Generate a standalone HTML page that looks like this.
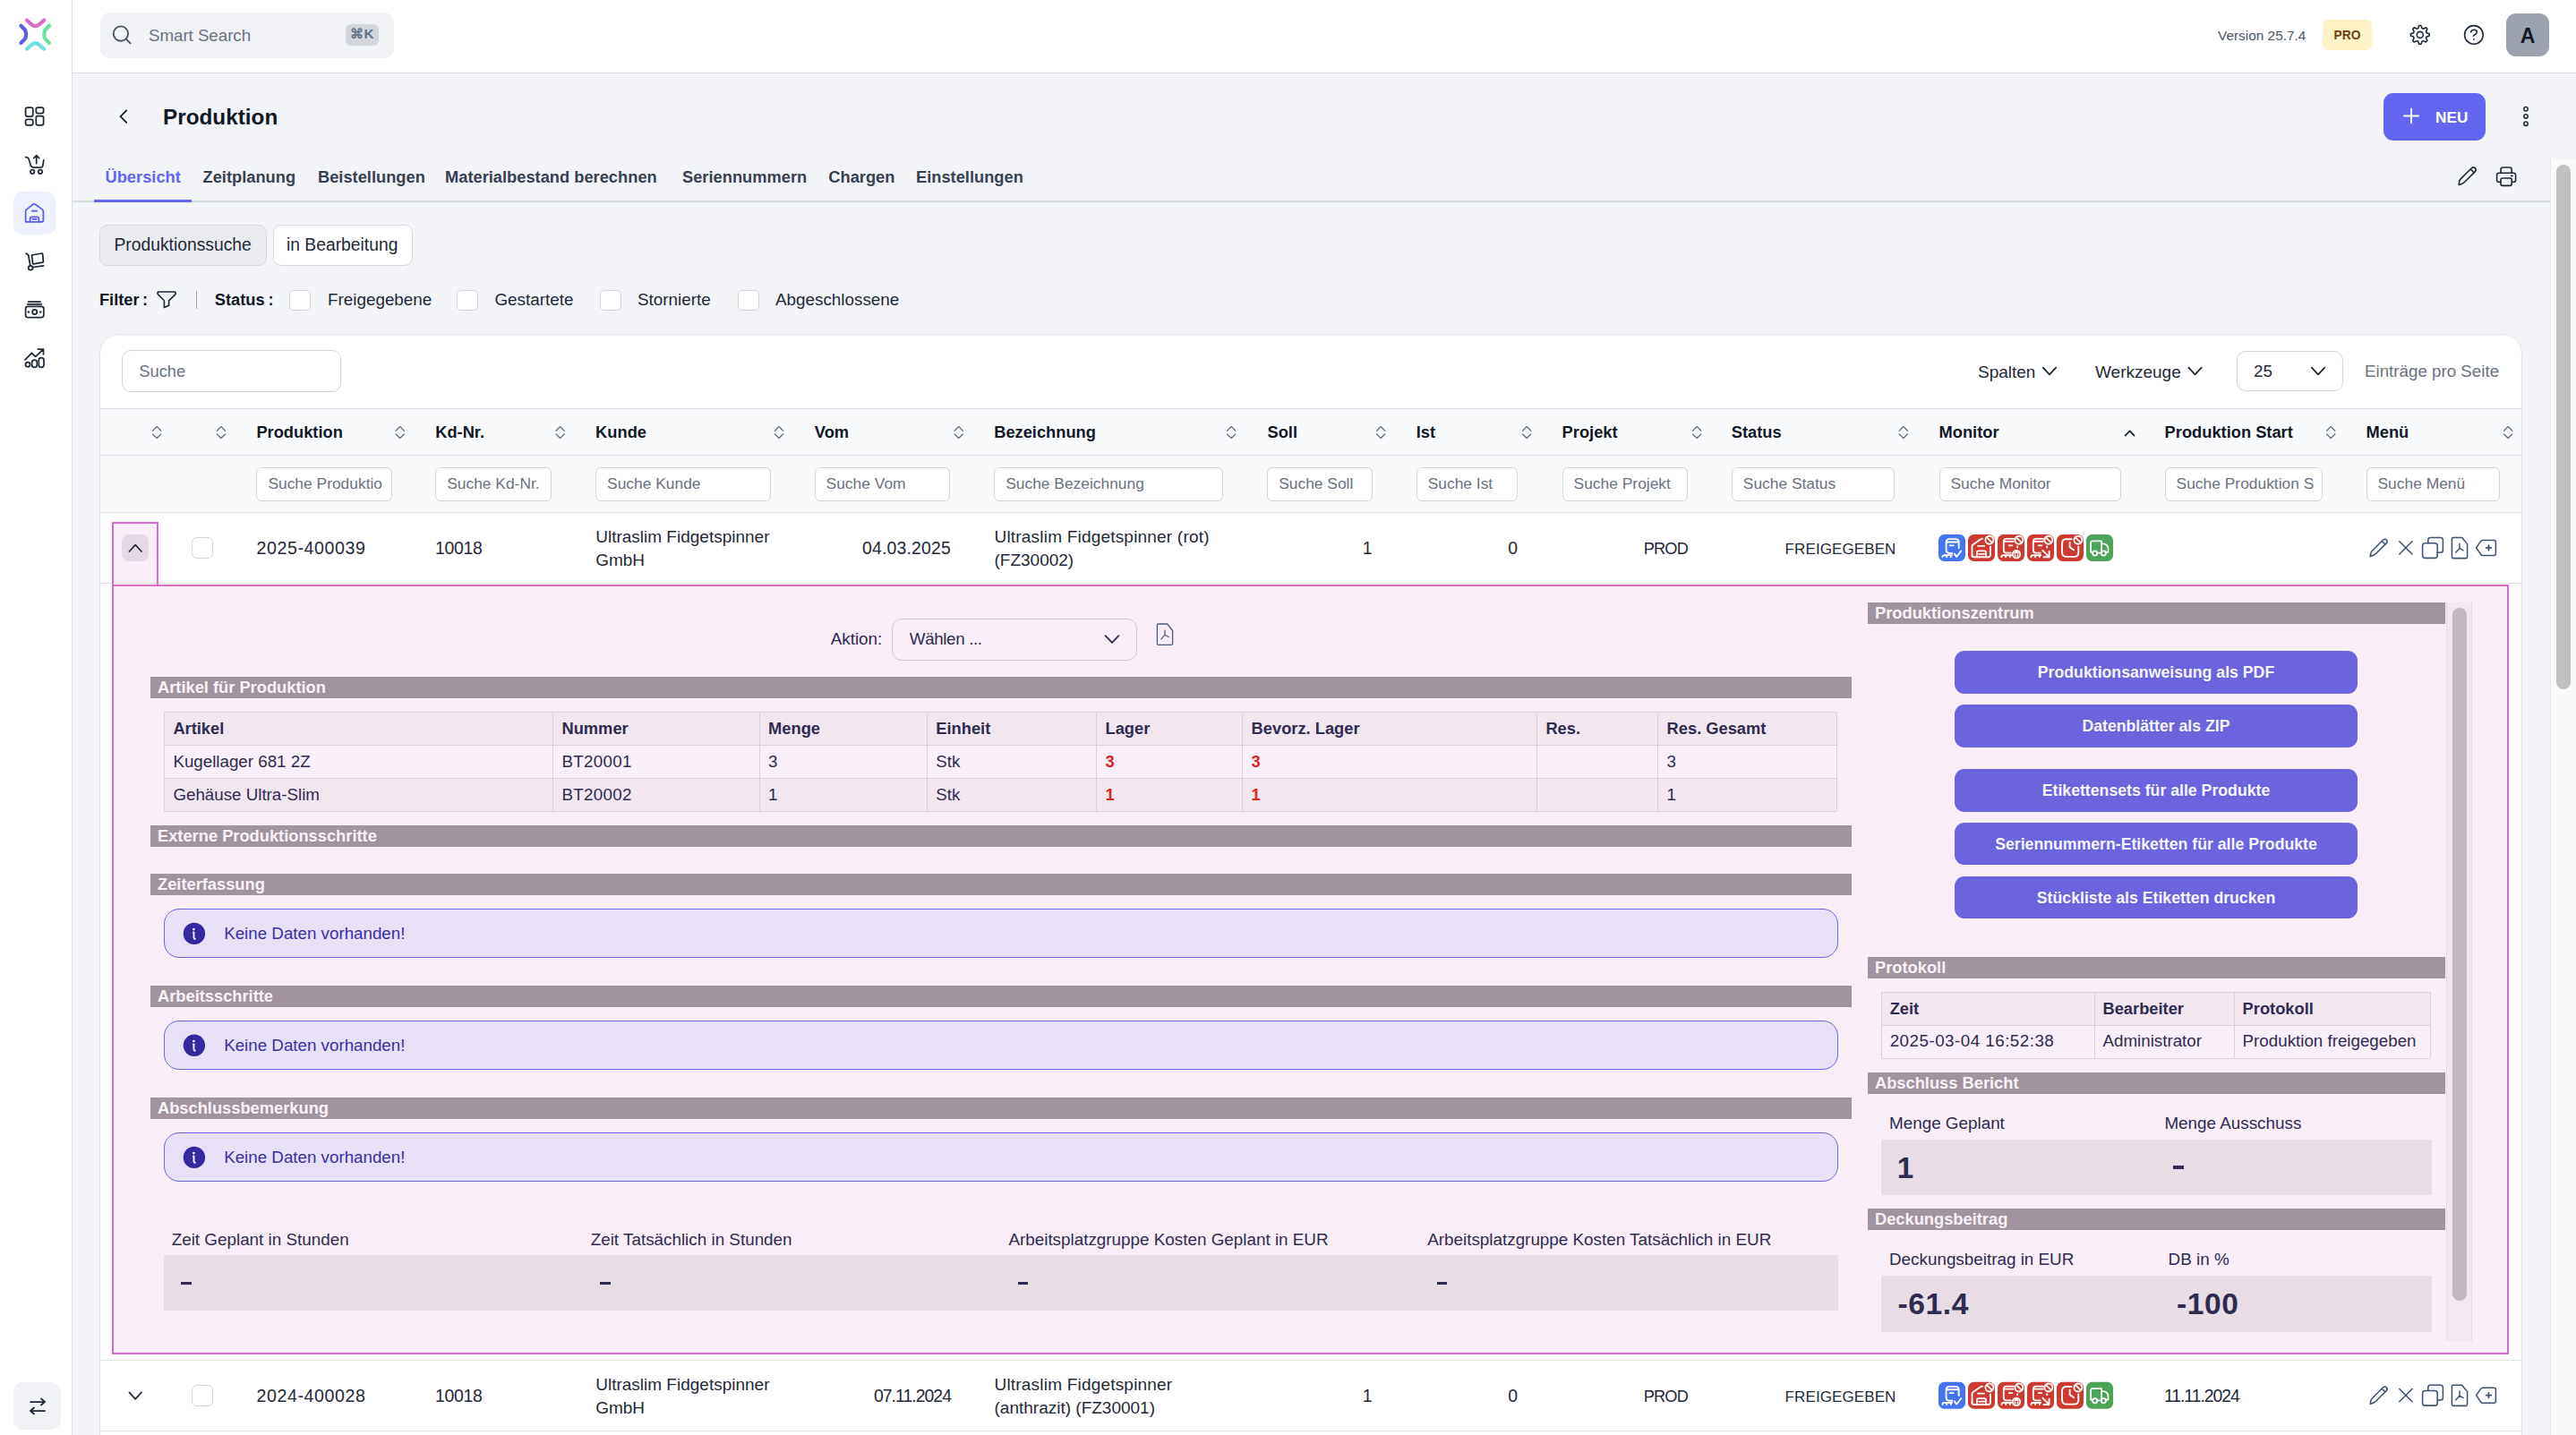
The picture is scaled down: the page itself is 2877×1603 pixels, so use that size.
<!DOCTYPE html>
<html lang="de"><head><meta charset="utf-8"><title>Produktion</title>
<style>
html,body{margin:0;padding:0;}
body{width:2877px;height:1603px;overflow:hidden;position:relative;background:#f3f4f7;font-family:"Liberation Sans",sans-serif;color:#1f2937;}
.t{position:absolute;line-height:1;white-space:nowrap;}
.r{position:absolute;box-sizing:border-box;}
svg.ov{position:absolute;left:0;top:0;width:2877px;height:1603px;overflow:visible;}
</style></head><body>

<div class="r" style="left:0.0px;top:0.0px;width:2877.0px;height:82.0px;background:#fff;border-bottom:1px solid #dcdfe5;"></div>
<div class="r" style="left:0.0px;top:0.0px;width:81.0px;height:1603.0px;background:#fff;border-right:1px solid #dcdfe5;"></div>
<div class="r" style="left:112.0px;top:14.0px;width:328.0px;height:51.0px;background:#f1f2f6;border-radius:11px;"></div>
<div class="t" style="left:166.0px;top:31.0px;font-size:18.75px;color:#6b7280;letter-spacing:-0.05px;">Smart Search</div>
<div class="r" style="left:386.0px;top:27.0px;width:37.0px;height:24.0px;background:#d3d6dc;border-radius:6px;"></div>
<div class="t" style="left:386.0px;width:37px;text-align:center;top:29.7px;font-size:15.4px;font-weight:700;color:#64748b;">&#8984;K</div>
<div class="t" style="left:2477.0px;top:31.9px;font-size:15.4px;color:#4b5563;">Version 25.7.4</div>
<div class="r" style="left:2594.0px;top:22.0px;width:55.0px;height:34.0px;background:#fef3c7;border-radius:6px;"></div>
<div class="t" style="left:2594.0px;width:55px;text-align:center;top:33.0px;font-size:13.8px;font-weight:700;color:#713f12;">PRO</div>
<div class="r" style="left:2799.0px;top:15.0px;width:48.0px;height:48.0px;background:#9ca3af;border-radius:11px;"></div>
<div class="t" style="left:2799.0px;width:48px;text-align:center;top:28.9px;font-size:23px;font-weight:700;color:#111827;">A</div>
<div class="r" style="left:15.0px;top:214.0px;width:47.0px;height:48.0px;background:#eef0fd;border-radius:10px;"></div>
<div class="r" style="left:15.0px;top:1544.0px;width:53.0px;height:53.0px;background:#f1f2f6;border-radius:11px;"></div>
<div class="t" style="left:182.0px;top:118.5px;font-size:24.3px;font-weight:700;color:#111827;">Produktion</div>
<div class="r" style="left:2662.0px;top:104.0px;width:114.0px;height:53.0px;background:#6366f1;border-radius:11px;"></div>
<div class="t" style="left:2720.0px;top:123.1px;font-size:17.2px;font-weight:700;color:#ffffff;">NEU</div>
<div class="r" style="left:81.0px;top:223.5px;width:2767.0px;height:2.5px;background:#d7dbe2;"></div>
<div class="r" style="left:105.0px;top:222.5px;width:109.0px;height:3.5px;background:#6366f1;"></div>
<div class="t" style="left:117.5px;top:189.2px;font-size:18.3px;font-weight:700;color:#6366f1;">&Uuml;bersicht</div>
<div class="t" style="left:226.5px;top:189.2px;font-size:18.3px;font-weight:700;color:#374151;">Zeitplanung</div>
<div class="t" style="left:355.0px;top:189.2px;font-size:18.3px;font-weight:700;color:#374151;">Beistellungen</div>
<div class="t" style="left:497.0px;top:189.2px;font-size:18.3px;font-weight:700;color:#374151;">Materialbestand berechnen</div>
<div class="t" style="left:762.0px;top:189.2px;font-size:18.3px;font-weight:700;color:#374151;">Seriennummern</div>
<div class="t" style="left:925.3px;top:189.2px;font-size:18.3px;font-weight:700;color:#374151;">Chargen</div>
<div class="t" style="left:1023.0px;top:189.2px;font-size:18.3px;font-weight:700;color:#374151;">Einstellungen</div>
<div class="r" style="left:111.0px;top:251.0px;width:187.0px;height:46.0px;background:#eaebef;border:1px solid #d5d8de;border-radius:9px;"></div>
<div class="t" style="left:127.5px;top:264.4px;font-size:19.3px;color:#1f2937;">Produktionssuche</div>
<div class="r" style="left:304.5px;top:251.0px;width:156.5px;height:46.0px;background:#fff;border:1px solid #d5d8de;border-radius:9px;"></div>
<div class="t" style="left:320.0px;top:264.4px;font-size:19.3px;color:#1f2937;">in Bearbeitung</div>
<div class="t" style="left:111.0px;top:326.3px;font-size:18.2px;font-weight:700;color:#111827;">Filter</div>
<div class="t" style="left:159.0px;top:326.3px;font-size:18.2px;font-weight:700;color:#111827;">:</div>
<div class="r" style="left:218.5px;top:325.0px;width:1.5px;height:20.0px;background:#9ca3af;"></div>
<div class="t" style="left:239.8px;top:326.2px;font-size:18.3px;font-weight:700;color:#111827;">Status</div>
<div class="t" style="left:299.5px;top:326.3px;font-size:18.2px;font-weight:700;color:#111827;">:</div>
<div class="r" style="left:323.0px;top:323.5px;width:23.5px;height:23.5px;background:#fff;border:1px solid #d1d5db;border-radius:5px;"></div>
<div class="t" style="left:366.0px;top:325.7px;font-size:18.85px;color:#1f2937;">Freigegebene</div>
<div class="r" style="left:510.4px;top:323.5px;width:23.5px;height:23.5px;background:#fff;border:1px solid #d1d5db;border-radius:5px;"></div>
<div class="t" style="left:552.4px;top:325.7px;font-size:18.85px;color:#1f2937;">Gestartete</div>
<div class="r" style="left:670.3px;top:323.5px;width:23.5px;height:23.5px;background:#fff;border:1px solid #d1d5db;border-radius:5px;"></div>
<div class="t" style="left:712.0px;top:325.7px;font-size:18.85px;color:#1f2937;">Stornierte</div>
<div class="r" style="left:824.0px;top:323.5px;width:23.5px;height:23.5px;background:#fff;border:1px solid #d1d5db;border-radius:5px;"></div>
<div class="t" style="left:866.0px;top:325.7px;font-size:18.85px;color:#1f2937;">Abgeschlossene</div>
<div class="r" style="left:111.0px;top:372.6px;width:2706.0px;height:1327.4px;background:#fff;border:1px solid #e2e5ea;border-radius:22px 22px 0 0;"></div>
<div class="r" style="left:136.0px;top:391.0px;width:244.5px;height:46.5px;background:#fff;border:1px solid #d1d5db;border-radius:10px;"></div>
<div class="t" style="left:155.3px;top:406.2px;font-size:18.3px;color:#6b7280;">Suche</div>
<div class="t" style="left:2209.0px;top:405.6px;font-size:19.0px;color:#1f2937;">Spalten</div>
<div class="t" style="left:2340.0px;top:405.6px;font-size:19.0px;color:#1f2937;">Werkzeuge</div>
<div class="r" style="left:2498.0px;top:391.6px;width:118.5px;height:45.9px;background:#fff;border:1px solid #d1d5db;border-radius:10px;"></div>
<div class="t" style="left:2517.0px;top:405.8px;font-size:18.75px;color:#1f2937;">25</div>
<div class="t" style="left:2641.0px;top:405.8px;font-size:18.75px;color:#6b7280;">Eintr&auml;ge pro Seite</div>
<div class="r" style="left:112.0px;top:456.0px;width:2704.0px;height:116.5px;background:#f9fafb;border-top:1px solid #dde1e6;border-bottom:1px solid #dde1e6;"></div>
<div class="r" style="left:112.0px;top:507.5px;width:2704.0px;height:1.0px;background:#dde1e6;"></div>
<div class="t" style="left:286.4px;top:474.4px;font-size:18.3px;font-weight:700;color:#111827;">Produktion</div>
<div class="r" style="left:286.4px;top:521.5px;width:151.2px;height:38.0px;background:#fff;border:1px solid #d1d5db;border-radius:6px;overflow:hidden;"></div>
<div class="t" style="left:299.4px;top:532.2px;width:133.2px;overflow:hidden;font-size:17.4px;color:#6b7280;">Suche Produktio</div>
<div class="t" style="left:486.2px;top:474.4px;font-size:18.3px;font-weight:700;color:#111827;">Kd-Nr.</div>
<div class="r" style="left:486.2px;top:521.5px;width:130.3px;height:38.0px;background:#fff;border:1px solid #d1d5db;border-radius:6px;overflow:hidden;"></div>
<div class="t" style="left:499.2px;top:532.2px;width:112.3px;overflow:hidden;font-size:17.4px;color:#6b7280;">Suche Kd-Nr.</div>
<div class="t" style="left:665.1px;top:474.4px;font-size:18.3px;font-weight:700;color:#111827;">Kunde</div>
<div class="r" style="left:665.1px;top:521.5px;width:195.5px;height:38.0px;background:#fff;border:1px solid #d1d5db;border-radius:6px;overflow:hidden;"></div>
<div class="t" style="left:678.1px;top:532.2px;width:177.5px;overflow:hidden;font-size:17.4px;color:#6b7280;">Suche Kunde</div>
<div class="t" style="left:909.8px;top:474.4px;font-size:18.3px;font-weight:700;color:#111827;">Vom</div>
<div class="r" style="left:909.6px;top:521.5px;width:151.7px;height:38.0px;background:#fff;border:1px solid #d1d5db;border-radius:6px;overflow:hidden;"></div>
<div class="t" style="left:922.6px;top:532.2px;width:133.7px;overflow:hidden;font-size:17.4px;color:#6b7280;">Suche Vom</div>
<div class="t" style="left:1110.2px;top:474.4px;font-size:18.3px;font-weight:700;color:#111827;">Bezeichnung</div>
<div class="r" style="left:1110.2px;top:521.5px;width:256.3px;height:38.0px;background:#fff;border:1px solid #d1d5db;border-radius:6px;overflow:hidden;"></div>
<div class="t" style="left:1123.2px;top:532.2px;width:238.3px;overflow:hidden;font-size:17.4px;color:#6b7280;">Suche Bezeichnung</div>
<div class="t" style="left:1415.5px;top:474.4px;font-size:18.3px;font-weight:700;color:#111827;">Soll</div>
<div class="r" style="left:1415.2px;top:521.5px;width:117.4px;height:38.0px;background:#fff;border:1px solid #d1d5db;border-radius:6px;overflow:hidden;"></div>
<div class="t" style="left:1428.2px;top:532.2px;width:99.4px;overflow:hidden;font-size:17.4px;color:#6b7280;">Suche Soll</div>
<div class="t" style="left:1581.7px;top:474.4px;font-size:18.3px;font-weight:700;color:#111827;">Ist</div>
<div class="r" style="left:1581.7px;top:521.5px;width:113.5px;height:38.0px;background:#fff;border:1px solid #d1d5db;border-radius:6px;overflow:hidden;"></div>
<div class="t" style="left:1594.7px;top:532.2px;width:95.5px;overflow:hidden;font-size:17.4px;color:#6b7280;">Suche Ist</div>
<div class="t" style="left:1744.6px;top:474.4px;font-size:18.3px;font-weight:700;color:#111827;">Projekt</div>
<div class="r" style="left:1744.6px;top:521.5px;width:140.8px;height:38.0px;background:#fff;border:1px solid #d1d5db;border-radius:6px;overflow:hidden;"></div>
<div class="t" style="left:1757.6px;top:532.2px;width:122.8px;overflow:hidden;font-size:17.4px;color:#6b7280;">Suche Projekt</div>
<div class="t" style="left:1933.8px;top:474.4px;font-size:18.3px;font-weight:700;color:#111827;">Status</div>
<div class="r" style="left:1933.8px;top:521.5px;width:182.6px;height:38.0px;background:#fff;border:1px solid #d1d5db;border-radius:6px;overflow:hidden;"></div>
<div class="t" style="left:1946.8px;top:532.2px;width:164.6px;overflow:hidden;font-size:17.4px;color:#6b7280;">Suche Status</div>
<div class="t" style="left:2165.5px;top:474.4px;font-size:18.3px;font-weight:700;color:#111827;">Monitor</div>
<div class="r" style="left:2165.5px;top:521.5px;width:203.2px;height:38.0px;background:#fff;border:1px solid #d1d5db;border-radius:6px;overflow:hidden;"></div>
<div class="t" style="left:2178.5px;top:532.2px;width:185.2px;overflow:hidden;font-size:17.4px;color:#6b7280;">Suche Monitor</div>
<div class="t" style="left:2417.6px;top:474.4px;font-size:18.3px;font-weight:700;color:#111827;">Produktion Start</div>
<div class="r" style="left:2417.6px;top:521.5px;width:176.1px;height:38.0px;background:#fff;border:1px solid #d1d5db;border-radius:6px;overflow:hidden;"></div>
<div class="t" style="left:2430.6px;top:532.2px;width:158.1px;overflow:hidden;font-size:17.4px;color:#6b7280;">Suche Produktion S</div>
<div class="t" style="left:2642.5px;top:474.4px;font-size:18.3px;font-weight:700;color:#111827;">Men&uuml;</div>
<div class="r" style="left:2642.5px;top:521.5px;width:149.0px;height:38.0px;background:#fff;border:1px solid #d1d5db;border-radius:6px;overflow:hidden;"></div>
<div class="t" style="left:2655.5px;top:532.2px;width:131.0px;overflow:hidden;font-size:17.4px;color:#6b7280;">Suche Men&uuml;</div>
<div class="r" style="left:112.0px;top:651.0px;width:2704.0px;height:1.0px;background:#dde1e6;"></div>
<div class="r" style="left:214.2px;top:600.2px;width:23.4px;height:23.6px;background:#fff;border:1.5px solid #d1d5db;border-radius:6px;"></div>
<div class="t" style="left:286.5px;top:603.0px;font-size:19.6px;color:#1f2937;letter-spacing:0.6px;">2025-400039</div>
<div class="t" style="left:486.0px;top:603.2px;font-size:19.4px;color:#1f2937;letter-spacing:-0.3px;">10018</div>
<div class="t" style="left:665.2px;top:589.8px;font-size:19.0px;color:#1f2937;">Ultraslim Fidgetspinner</div>
<div class="t" style="left:665.2px;top:616.2px;font-size:19.0px;color:#1f2937;">GmbH</div>
<div class="t" style="left:762.0px;width:300px;text-align:right;top:603.2px;font-size:19.4px;color:#1f2937;letter-spacing:0.2px;">04.03.2025</div>
<div class="t" style="left:1110.5px;top:589.8px;font-size:19.0px;color:#1f2937;letter-spacing:0.2px;">Ultraslim Fidgetspinner (rot)</div>
<div class="t" style="left:1110.5px;top:616.2px;font-size:19.0px;color:#1f2937;">(FZ30002)</div>
<div class="t" style="left:1432.6px;width:100px;text-align:right;top:603.2px;font-size:19.4px;color:#1f2937;">1</div>
<div class="t" style="left:1595.0px;width:100px;text-align:right;top:603.2px;font-size:19.4px;color:#1f2937;">0</div>
<div class="t" style="left:1685.0px;width:200px;text-align:right;top:604.2px;font-size:18.2px;color:#1f2937;letter-spacing:-0.8px;">PROD</div>
<div class="t" style="left:1817.5px;width:300px;text-align:right;top:605.1px;font-size:17.0px;color:#1f2937;letter-spacing:0.1px;">FREIGEGEBEN</div>
<div class="r" style="left:112.0px;top:1597.5px;width:2704.0px;height:1.0px;background:#dde1e6;"></div>
<div class="r" style="left:214.2px;top:1547.0px;width:23.4px;height:23.6px;background:#fff;border:1.5px solid #d1d5db;border-radius:6px;"></div>
<div class="t" style="left:286.5px;top:1549.8px;font-size:19.6px;color:#1f2937;letter-spacing:0.6px;">2024-400028</div>
<div class="t" style="left:486.0px;top:1549.9px;font-size:19.4px;color:#1f2937;letter-spacing:-0.3px;">10018</div>
<div class="t" style="left:665.2px;top:1536.6px;font-size:19.0px;color:#1f2937;">Ultraslim Fidgetspinner</div>
<div class="t" style="left:665.2px;top:1563.0px;font-size:19.0px;color:#1f2937;">GmbH</div>
<div class="t" style="left:762.0px;width:300px;text-align:right;top:1549.9px;font-size:19.4px;color:#1f2937;letter-spacing:-0.95px;">07.11.2024</div>
<div class="t" style="left:1110.5px;top:1536.6px;font-size:19.0px;color:#1f2937;letter-spacing:0.2px;">Ultraslim Fidgetspinner</div>
<div class="t" style="left:1110.5px;top:1563.0px;font-size:19.0px;color:#1f2937;">(anthrazit) (FZ30001)</div>
<div class="t" style="left:1432.6px;width:100px;text-align:right;top:1549.9px;font-size:19.4px;color:#1f2937;">1</div>
<div class="t" style="left:1595.0px;width:100px;text-align:right;top:1549.9px;font-size:19.4px;color:#1f2937;">0</div>
<div class="t" style="left:1685.0px;width:200px;text-align:right;top:1550.9px;font-size:18.2px;color:#1f2937;letter-spacing:-0.8px;">PROD</div>
<div class="t" style="left:1817.5px;width:300px;text-align:right;top:1551.9px;font-size:17.0px;color:#1f2937;letter-spacing:0.1px;">FREIGEGEBEN</div>
<div class="t" style="left:2417.0px;top:1549.9px;font-size:19.4px;color:#1f2937;letter-spacing:-1.05px;">11.11.2024</div>
<div class="r" style="left:112.0px;top:1519.0px;width:2704.0px;height:1.0px;background:#dde1e6;"></div>
<div class="r" style="left:125.0px;top:583.0px;width:52.0px;height:72.0px;background:#f9eef7;border:2px solid #d86bcb;border-bottom:none;"></div>
<div class="r" style="left:125.0px;top:653.0px;width:2677.0px;height:860.0px;background:#f9eef7;border:2px solid #d86bcb;"></div>
<div class="r" style="left:127.0px;top:651.0px;width:48.0px;height:1.0px;background:#dde1e6;"></div>
<div class="r" style="left:136.0px;top:597.0px;width:30.0px;height:30.0px;background:#e4dae7;border-radius:8px;"></div>
<div class="t" style="left:927.7px;top:705.3px;font-size:18.85px;color:#2e2c50;">Aktion:</div>
<div class="r" style="left:996.0px;top:691.0px;width:274.0px;height:46.5px;border:1px solid #cfc6da;border-radius:11px;"></div>
<div class="t" style="left:1015.8px;top:705.4px;font-size:18.75px;color:#2e2c50;letter-spacing:-0.35px;">W&auml;hlen ...</div>
<div class="r" style="left:168.0px;top:756.0px;width:1900.3px;height:24.0px;background:#a1949e;"></div>
<div class="t" style="left:176.0px;top:758.8px;font-size:18.3px;font-weight:700;color:#f9f3f8;">Artikel f&uuml;r Produktion</div>
<div class="r" style="left:168.0px;top:922.0px;width:1900.3px;height:24.0px;background:#a1949e;"></div>
<div class="t" style="left:176.0px;top:924.8px;font-size:18.3px;font-weight:700;color:#f9f3f8;">Externe Produktionsschritte</div>
<div class="r" style="left:168.0px;top:976.2px;width:1900.3px;height:24.0px;background:#a1949e;"></div>
<div class="t" style="left:176.0px;top:979.0px;font-size:18.3px;font-weight:700;color:#f9f3f8;">Zeiterfassung</div>
<div class="r" style="left:168.0px;top:1101.1px;width:1900.3px;height:24.0px;background:#a1949e;"></div>
<div class="t" style="left:176.0px;top:1103.9px;font-size:18.3px;font-weight:700;color:#f9f3f8;">Arbeitsschritte</div>
<div class="r" style="left:168.0px;top:1226.0px;width:1900.3px;height:24.0px;background:#a1949e;"></div>
<div class="t" style="left:176.0px;top:1228.8px;font-size:18.3px;font-weight:700;color:#f9f3f8;">Abschlussbemerkung</div>
<div class="r" style="left:183.4px;top:795.5px;width:1867.6px;height:36.8px;background:#f2e6ef;"></div>
<div class="r" style="left:183.4px;top:832.3px;width:1867.6px;height:36.9px;background:#f9eff8;"></div>
<div class="r" style="left:183.4px;top:869.2px;width:1867.6px;height:37.2px;background:#f2e6ef;"></div>
<div class="r" style="left:183.4px;top:795.0px;width:1867.6px;height:1.0px;background:#dccfd9;"></div>
<div class="r" style="left:183.4px;top:831.8px;width:1867.6px;height:1.0px;background:#dccfd9;"></div>
<div class="r" style="left:183.4px;top:868.7px;width:1867.6px;height:1.0px;background:#dccfd9;"></div>
<div class="r" style="left:183.4px;top:905.9px;width:1867.6px;height:1.0px;background:#dccfd9;"></div>
<div class="r" style="left:182.9px;top:795.5px;width:1.0px;height:110.9px;background:#dccfd9;"></div>
<div class="r" style="left:617.0px;top:795.5px;width:1.0px;height:110.9px;background:#dccfd9;"></div>
<div class="r" style="left:847.6px;top:795.5px;width:1.0px;height:110.9px;background:#dccfd9;"></div>
<div class="r" style="left:1034.8px;top:795.5px;width:1.0px;height:110.9px;background:#dccfd9;"></div>
<div class="r" style="left:1224.0px;top:795.5px;width:1.0px;height:110.9px;background:#dccfd9;"></div>
<div class="r" style="left:1387.1px;top:795.5px;width:1.0px;height:110.9px;background:#dccfd9;"></div>
<div class="r" style="left:1715.9px;top:795.5px;width:1.0px;height:110.9px;background:#dccfd9;"></div>
<div class="r" style="left:1851.1px;top:795.5px;width:1.0px;height:110.9px;background:#dccfd9;"></div>
<div class="r" style="left:2050.5px;top:795.5px;width:1.0px;height:110.9px;background:#dccfd9;"></div>
<div class="t" style="left:193.4px;top:805.2px;font-size:18.3px;font-weight:700;color:#2e2c50;">Artikel</div>
<div class="t" style="left:627.5px;top:805.2px;font-size:18.3px;font-weight:700;color:#2e2c50;">Nummer</div>
<div class="t" style="left:858.1px;top:805.2px;font-size:18.3px;font-weight:700;color:#2e2c50;">Menge</div>
<div class="t" style="left:1045.3px;top:805.2px;font-size:18.3px;font-weight:700;color:#2e2c50;">Einheit</div>
<div class="t" style="left:1234.5px;top:805.2px;font-size:18.3px;font-weight:700;color:#2e2c50;">Lager</div>
<div class="t" style="left:1397.6px;top:805.2px;font-size:18.3px;font-weight:700;color:#2e2c50;">Bevorz. Lager</div>
<div class="t" style="left:1726.4px;top:805.2px;font-size:18.3px;font-weight:700;color:#2e2c50;">Res.</div>
<div class="t" style="left:1861.6px;top:805.2px;font-size:18.3px;font-weight:700;color:#2e2c50;">Res. Gesamt</div>
<div class="t" style="left:193.4px;top:841.6px;font-size:18.75px;color:#2e2c50;">Kugellager 681 2Z</div>
<div class="t" style="left:627.5px;top:841.6px;font-size:18.75px;color:#2e2c50;letter-spacing:0.3px;">BT20001</div>
<div class="t" style="left:858.1px;top:841.6px;font-size:18.75px;color:#2e2c50;">3</div>
<div class="t" style="left:1045.3px;top:841.6px;font-size:18.75px;color:#2e2c50;">Stk</div>
<div class="t" style="left:1234.5px;top:842.0px;font-size:18.3px;font-weight:700;color:#dc2626;">3</div>
<div class="t" style="left:1397.6px;top:842.0px;font-size:18.3px;font-weight:700;color:#dc2626;">3</div>
<div class="t" style="left:1861.6px;top:841.6px;font-size:18.75px;color:#2e2c50;">3</div>
<div class="t" style="left:193.4px;top:878.5px;font-size:18.75px;color:#2e2c50;">Geh&auml;use Ultra-Slim</div>
<div class="t" style="left:627.5px;top:878.5px;font-size:18.75px;color:#2e2c50;letter-spacing:0.3px;">BT20002</div>
<div class="t" style="left:858.1px;top:878.5px;font-size:18.75px;color:#2e2c50;">1</div>
<div class="t" style="left:1045.3px;top:878.5px;font-size:18.75px;color:#2e2c50;">Stk</div>
<div class="t" style="left:1234.5px;top:878.9px;font-size:18.3px;font-weight:700;color:#dc2626;">1</div>
<div class="t" style="left:1397.6px;top:878.9px;font-size:18.3px;font-weight:700;color:#dc2626;">1</div>
<div class="t" style="left:1861.6px;top:878.5px;font-size:18.75px;color:#2e2c50;">1</div>
<div class="r" style="left:183.3px;top:1015.3px;width:1869.7px;height:55.2px;background:#e8e0f6;border:1px solid #6c66e6;border-radius:17px;"></div>
<div class="t" style="left:250.2px;top:1034.4px;font-size:18.75px;color:#3a30a6;">Keine Daten vorhanden!</div>
<div class="r" style="left:183.3px;top:1140.2px;width:1869.7px;height:55.2px;background:#e8e0f6;border:1px solid #6c66e6;border-radius:17px;"></div>
<div class="t" style="left:250.2px;top:1159.3px;font-size:18.75px;color:#3a30a6;">Keine Daten vorhanden!</div>
<div class="r" style="left:183.3px;top:1265.3px;width:1869.7px;height:55.2px;background:#e8e0f6;border:1px solid #6c66e6;border-radius:17px;"></div>
<div class="t" style="left:250.2px;top:1284.4px;font-size:18.75px;color:#3a30a6;">Keine Daten vorhanden!</div>
<div class="r" style="left:183.2px;top:1402.0px;width:1869.8px;height:61.6px;background:#e8dce5;"></div>
<div class="t" style="left:191.7px;top:1375.7px;font-size:18.85px;color:#2e2c50;">Zeit Geplant in Stunden</div>
<div class="r" style="left:202.4px;top:1431.5px;width:11.5px;height:3.5px;background:#2e2c50;"></div>
<div class="t" style="left:659.7px;top:1375.7px;font-size:18.85px;color:#2e2c50;">Zeit Tats&auml;chlich in Stunden</div>
<div class="r" style="left:670.0px;top:1431.5px;width:11.5px;height:3.5px;background:#2e2c50;"></div>
<div class="t" style="left:1126.4px;top:1375.7px;font-size:18.85px;color:#2e2c50;">Arbeitsplatzgruppe Kosten Geplant in EUR</div>
<div class="r" style="left:1136.9px;top:1431.5px;width:11.5px;height:3.5px;background:#2e2c50;"></div>
<div class="t" style="left:1594.2px;top:1375.7px;font-size:18.85px;color:#2e2c50;">Arbeitsplatzgruppe Kosten Tats&auml;chlich in EUR</div>
<div class="r" style="left:1604.7px;top:1431.5px;width:11.5px;height:3.5px;background:#2e2c50;"></div>
<div class="r" style="left:2731.5px;top:673.0px;width:29.5px;height:825.0px;background:#f3e8f1;border-left:1.5px solid #e6dae4;border-right:1.5px solid #e6dae4;"></div>
<div class="r" style="left:2739.0px;top:679.0px;width:16.0px;height:774.0px;background:#c3b7c2;border-radius:8px;"></div>
<div class="r" style="left:2086.0px;top:673.0px;width:645.0px;height:24.0px;background:#a1949e;"></div>
<div class="t" style="left:2094.0px;top:675.8px;font-size:18.3px;font-weight:700;color:#f9f3f8;">Produktionszentrum</div>
<div class="r" style="left:2086.0px;top:1069.0px;width:645.0px;height:24.0px;background:#a1949e;"></div>
<div class="t" style="left:2094.0px;top:1071.8px;font-size:18.3px;font-weight:700;color:#f9f3f8;">Protokoll</div>
<div class="r" style="left:2086.0px;top:1198.1px;width:645.0px;height:24.0px;background:#a1949e;"></div>
<div class="t" style="left:2094.0px;top:1200.9px;font-size:18.3px;font-weight:700;color:#f9f3f8;">Abschluss Bericht</div>
<div class="r" style="left:2086.0px;top:1350.3px;width:645.0px;height:24.0px;background:#a1949e;"></div>
<div class="t" style="left:2094.0px;top:1353.1px;font-size:18.3px;font-weight:700;color:#f9f3f8;">Deckungsbeitrag</div>
<div class="r" style="left:2183.0px;top:727.3px;width:450.0px;height:47.3px;background:#6c63de;border-radius:11px;"></div>
<div class="t" style="left:2183.0px;width:450px;text-align:center;top:743.2px;font-size:17.7px;font-weight:700;color:#f6f4fd;">Produktionsanweisung als PDF</div>
<div class="r" style="left:2183.0px;top:787.3px;width:450.0px;height:47.3px;background:#6c63de;border-radius:11px;"></div>
<div class="t" style="left:2183.0px;width:450px;text-align:center;top:803.2px;font-size:17.7px;font-weight:700;color:#f6f4fd;">Datenbl&auml;tter als ZIP</div>
<div class="r" style="left:2183.0px;top:859.3px;width:450.0px;height:47.3px;background:#6c63de;border-radius:11px;"></div>
<div class="t" style="left:2183.0px;width:450px;text-align:center;top:875.2px;font-size:17.7px;font-weight:700;color:#f6f4fd;">Etikettensets f&uuml;r alle Produkte</div>
<div class="r" style="left:2183.0px;top:919.2px;width:450.0px;height:47.3px;background:#6c63de;border-radius:11px;"></div>
<div class="t" style="left:2183.0px;width:450px;text-align:center;top:935.1px;font-size:17.7px;font-weight:700;color:#f6f4fd;">Seriennummern-Etiketten f&uuml;r alle Produkte</div>
<div class="r" style="left:2183.0px;top:979.1px;width:450.0px;height:47.3px;background:#6c63de;border-radius:11px;"></div>
<div class="t" style="left:2183.0px;width:450px;text-align:center;top:995.0px;font-size:17.7px;font-weight:700;color:#f6f4fd;">St&uuml;ckliste als Etiketten drucken</div>
<div class="r" style="left:2101.2px;top:1108.0px;width:613.1px;height:37.1px;background:#f2e6ef;"></div>
<div class="r" style="left:2101.2px;top:1145.1px;width:613.1px;height:37.2px;background:#f9eff8;"></div>
<div class="r" style="left:2101.2px;top:1107.5px;width:613.1px;height:1.0px;background:#dccfd9;"></div>
<div class="r" style="left:2101.2px;top:1144.6px;width:613.1px;height:1.0px;background:#dccfd9;"></div>
<div class="r" style="left:2101.2px;top:1181.8px;width:613.1px;height:1.0px;background:#dccfd9;"></div>
<div class="r" style="left:2100.7px;top:1108.0px;width:1.0px;height:74.3px;background:#dccfd9;"></div>
<div class="r" style="left:2338.5px;top:1108.0px;width:1.0px;height:74.3px;background:#dccfd9;"></div>
<div class="r" style="left:2494.6px;top:1108.0px;width:1.0px;height:74.3px;background:#dccfd9;"></div>
<div class="r" style="left:2713.8px;top:1108.0px;width:1.0px;height:74.3px;background:#dccfd9;"></div>
<div class="t" style="left:2110.7px;top:1117.7px;font-size:18.3px;font-weight:700;color:#2e2c50;">Zeit</div>
<div class="t" style="left:2348.5px;top:1117.7px;font-size:18.3px;font-weight:700;color:#2e2c50;">Bearbeiter</div>
<div class="t" style="left:2504.6px;top:1117.7px;font-size:18.3px;font-weight:700;color:#2e2c50;">Protokoll</div>
<div class="t" style="left:2110.7px;top:1154.3px;font-size:18.75px;color:#2e2c50;letter-spacing:0.5px;">2025-03-04 16:52:38</div>
<div class="t" style="left:2348.5px;top:1154.3px;font-size:18.75px;color:#2e2c50;">Administrator</div>
<div class="t" style="left:2504.6px;top:1154.3px;font-size:18.75px;color:#2e2c50;">Produktion freigegeben</div>
<div class="t" style="left:2110.0px;top:1245.7px;font-size:18.85px;color:#2e2c50;">Menge Geplant</div>
<div class="t" style="left:2417.4px;top:1245.7px;font-size:18.85px;color:#2e2c50;">Menge Ausschuss</div>
<div class="r" style="left:2101.2px;top:1273.0px;width:614.8px;height:61.6px;background:#e8dce5;"></div>
<div class="t" style="left:2118.7px;top:1288.1px;font-size:33px;font-weight:700;color:#2e2c50;">1</div>
<div class="r" style="left:2427.0px;top:1302.0px;width:11.5px;height:3.5px;background:#2e2c50;"></div>
<div class="t" style="left:2110.0px;top:1397.8px;font-size:18.85px;color:#2e2c50;">Deckungsbeitrag in EUR</div>
<div class="t" style="left:2421.6px;top:1397.8px;font-size:18.85px;color:#2e2c50;">DB in %</div>
<div class="r" style="left:2101.2px;top:1425.2px;width:614.8px;height:62.6px;background:#e8dce5;"></div>
<div class="t" style="left:2119.6px;top:1439.9px;font-size:33.5px;font-weight:700;color:#2e2c50;letter-spacing:0.6px;">-61.4</div>
<div class="t" style="left:2431.0px;top:1439.9px;font-size:33.5px;font-weight:700;color:#2e2c50;letter-spacing:0.6px;">-100</div>
<div class="r" style="left:2848.0px;top:178.0px;width:29.0px;height:1425.0px;background:#fafafa;border-left:1px solid #e6e6e6;"></div>
<div class="r" style="left:2855.0px;top:184.0px;width:16.0px;height:585.5px;background:#c1c1c1;border-radius:8px;"></div>
<svg class="ov" viewBox="0 0 2877 1603" fill="none" stroke-linecap="round" stroke-linejoin="round">
<g stroke-width="4.2">
<path d="M29.9 22.6 L35.5 27.6 Q39.4 30.8 43.4 27.6 L49.2 22.6" stroke="#d56fc7"/>
<path d="M23.4 28.8 L27.8 33.2 Q30.6 38.4 27.8 43.6 L23.4 48" stroke="#5a5fe3"/>
<path d="M55 28.8 L50.6 33.2 Q47.8 38.4 50.6 43.6 L55 48" stroke="#6be3a2"/>
<path d="M29.9 54.6 L35.5 49.8 Q39.4 46.6 43.4 49.8 L49.2 54.6" stroke="#6de0e0"/>
</g>
<g stroke="#4b5563" stroke-width="1.9"><circle cx="134.9" cy="37.6" r="8.2"/><path d="M140.8 43.6 L145.6 48.4"/></g>
<g stroke="#1f2937" stroke-width="1.6"><path d="M2700.58 31.63 L2701.71 28.56 L2703.89 28.56 L2705.02 31.63 L2706.37 32.19 L2709.34 30.82 L2710.88 32.36 L2709.51 35.33 L2710.07 36.68 L2713.14 37.81 L2713.14 39.99 L2710.07 41.12 L2709.51 42.47 L2710.88 45.44 L2709.34 46.98 L2706.37 45.61 L2705.02 46.17 L2703.89 49.24 L2701.71 49.24 L2700.58 46.17 L2699.23 45.61 L2696.26 46.98 L2694.72 45.44 L2696.09 42.47 L2695.53 41.12 L2692.46 39.99 L2692.46 37.81 L2695.53 36.68 L2696.09 35.33 L2694.72 32.36 L2696.26 30.82 L2699.23 32.19 Z"/><circle cx="2702.8" cy="38.9" r="3.5"/></g>
<g stroke="#1f2937" stroke-width="1.6"><circle cx="2762.9" cy="38.9" r="10.3"/><path d="M2759.7 36 Q2759.9 33.3 2763 33.2 Q2766.3 33.3 2766.3 36 Q2766.1 37.6 2764.4 38.5 L2762.6 39.6 V40.2"/><rect x="2762" y="43.1" width="1.6" height="1.6" fill="#1f2937" stroke="none"/></g>
<g stroke="#1f2937" stroke-width="1.75">
<rect x="28.6" y="120.2" width="8.2" height="9.8" rx="2"/><rect x="40.3" y="120.2" width="8.3" height="6.4" rx="2"/><rect x="28.6" y="133.4" width="8.2" height="6.4" rx="2"/><rect x="40.3" y="129.7" width="8.3" height="10.1" rx="2"/>
<path d="M28.6 175.6 Q31.6 175.2 32.4 178.4 L34.6 185.4 Q35.4 187 37.4 187 H45.6 Q47.4 187 47.8 185.2 L48.8 178.8"/><circle cx="36.2" cy="191.8" r="2.2"/><circle cx="45" cy="191.8" r="2.2"/><path d="M40.7 182.6 V173.6 M37.7 176.6 L40.7 173.6 L43.7 176.6"/>
<path d="M29.1 283.3 Q31.4 283.6 31.9 286 L33.8 296.8"/><circle cx="34.1" cy="299.3" r="2.4"/><path d="M36.8 298.5 L48.5 296.8"/><path d="M35.5 285 L46.6 283 Q47.4 283 47.6 283.8 L48.4 292.2 Q48.4 293 47.6 293.2 L37.6 294.8 Q36.8 294.9 36.6 294 Z"/>
<path d="M31.6 337.2 H45.1 M30.7 339.8 H46.3"/><rect x="28.6" y="342.3" width="20.2" height="12.2" rx="2.4"/><circle cx="38.7" cy="348.4" r="2.6"/><circle cx="31.9" cy="348.4" r="0.5" stroke-width="1.5"/><circle cx="45.3" cy="348.4" r="0.5" stroke-width="1.5"/>
<path d="M28 401.8 L35.4 394.3 L39.7 398.4 L48.5 390 M42.4 390 H48.5 V395.8"/><circle cx="31" cy="407.2" r="2.5"/><rect x="35.6" y="402.2" width="5.8" height="8.2" rx="2.9"/><rect x="43.3" y="399.6" width="5.7" height="10.8" rx="2.85"/>
<path d="M34 1566 H50 M46 1562.5 L50 1566 L46 1569.5 M50 1576 H34 M38 1572.5 L34 1576 L38 1579.5"/>
</g>
<g stroke="#5b5fe8" stroke-width="1.75"><path d="M28.6 247.8 V236.4 Q28.6 234.6 30.2 233.6 L37 228.2 Q38.2 227.4 39.4 228.2 L46.8 233.6 Q48.4 234.6 48.4 236.4 V246 Q48.4 247.8 46.6 247.8 H30.4 Q28.6 247.8 28.6 246 Z"/><path d="M35.7 235.7 H41.3"/><path d="M33.6 247.6 V244.2 Q33.6 242.3 35.5 242.3 H41.5 Q43.4 242.3 43.4 244.2 V247.6"/><path d="M36.3 244.8 H40.8"/></g>
<path d="M141.3 123.3 L134.5 130.1 L141.3 136.8" stroke="#111827" stroke-width="1.7"/>
<path d="M2693 121.4 V137.6 M2685 129.5 H2701" stroke="#ffffff" stroke-width="1.8"/>
<g stroke="#1f2937" stroke-width="1.5"><circle cx="2821" cy="121.8" r="2.2"/><circle cx="2821" cy="130" r="2.2"/><circle cx="2821" cy="138.2" r="2.2"/></g>
<g stroke="#1f2937" stroke-width="1.6"><path d="M2746.2 206.5 L2746.8 202.2 Q2747.1 200.9 2748.2 199.9 L2760.4 187.8 Q2762.3 186 2764.3 187.6 Q2766.2 189.6 2764.4 191.6 L2752.1 203.8 Q2751.2 204.8 2749.8 205.2 Z M2759.2 189 L2763.2 193"/></g>
<g stroke="#1f2937" stroke-width="1.6"><path d="M2792.8 203.3 H2790.6 Q2788.6 203.3 2788.6 201.3 V195.6 Q2788.6 193.2 2791 193.2 H2807.2 Q2809.6 193.2 2809.6 195.6 V201.3 Q2809.6 203.3 2807.6 203.3 H2805.4"/><path d="M2793 193 V189.4 Q2793 187 2795.4 187 H2802.8 Q2805.2 187 2805.2 189.4 V193"/><rect x="2793" y="199" width="12.2" height="8.4" rx="1.8"/><path d="M2804.6 196.4 H2806"/></g>
<path d="M176.6 326 H195.5 Q197 327.6 195.4 329.4 L188.6 335.8 V341.3 L183.4 343.4 V335.8 L176.9 329.4 Q175.3 327.6 176.6 326 Z" stroke="#1f2937" stroke-width="1.6"/>
<path d="M2281.8 410.6 L2289 418.4 L2296.2 410.6" stroke="#1f2937" stroke-width="1.8"/>
<path d="M2444.3 410.6 L2451.5 418.4 L2458.7 410.6" stroke="#1f2937" stroke-width="1.8"/>
<path d="M2581.8 410.6 L2589 418.4 L2596.2 410.6" stroke="#1f2937" stroke-width="1.8"/>
<path d="M170.6 481.2 L175.2 476.6 L179.8 481.2 M170.6 485 L175.2 489.6 L179.8 485" stroke="#6b7280" stroke-width="1.35"/>
<path d="M242.29999999999998 481.2 L246.89999999999998 476.6 L251.5 481.2 M242.29999999999998 485 L246.89999999999998 489.6 L251.5 485" stroke="#6b7280" stroke-width="1.35"/>
<path d="M442.1 481.2 L446.7 476.6 L451.3 481.2 M442.1 485 L446.7 489.6 L451.3 485" stroke="#6b7280" stroke-width="1.35"/>
<path d="M621.0 481.2 L625.6 476.6 L630.1999999999999 481.2 M621.0 485 L625.6 489.6 L630.1999999999999 485" stroke="#6b7280" stroke-width="1.35"/>
<path d="M865.4 481.2 L870.0 476.6 L874.5999999999999 481.2 M865.4 485 L870.0 489.6 L874.5999999999999 485" stroke="#6b7280" stroke-width="1.35"/>
<path d="M1066.1 481.2 L1070.7 476.6 L1075.3 481.2 M1066.1 485 L1070.7 489.6 L1075.3 485" stroke="#6b7280" stroke-width="1.35"/>
<path d="M1370.6 481.2 L1375.2 476.6 L1379.8 481.2 M1370.6 485 L1375.2 489.6 L1379.8 485" stroke="#6b7280" stroke-width="1.35"/>
<path d="M1537.6 481.2 L1542.2 476.6 L1546.8 481.2 M1537.6 485 L1542.2 489.6 L1546.8 485" stroke="#6b7280" stroke-width="1.35"/>
<path d="M1700.6 481.2 L1705.2 476.6 L1709.8 481.2 M1700.6 485 L1705.2 489.6 L1709.8 485" stroke="#6b7280" stroke-width="1.35"/>
<path d="M1890.6 481.2 L1895.2 476.6 L1899.8 481.2 M1890.6 485 L1895.2 489.6 L1899.8 485" stroke="#6b7280" stroke-width="1.35"/>
<path d="M2121.2 481.2 L2125.7999999999997 476.6 L2130.4 481.2 M2121.2 485 L2125.7999999999997 489.6 L2130.4 485" stroke="#6b7280" stroke-width="1.35"/>
<path d="M2598.6 481.2 L2603.2 476.6 L2607.8 481.2 M2598.6 485 L2603.2 489.6 L2607.8 485" stroke="#6b7280" stroke-width="1.35"/>
<path d="M2796.6 481.2 L2801.2 476.6 L2805.8 481.2 M2796.6 485 L2801.2 489.6 L2805.8 485" stroke="#6b7280" stroke-width="1.35"/>
<path d="M2373.6 486.6 L2378.6 481.4 L2383.6 486.6" stroke="#111827" stroke-width="1.6"/>
<path d="M144.4 616 L151.2 608.6 L158 616" stroke="#1f2937" stroke-width="1.7"/>
<path d="M144.4 1555.4 L151.2 1562.8 L158 1555.4" stroke="#1f2937" stroke-width="1.7"/>
<path d="M1234.6 710.2 L1242 717.8 L1249.4 710.2" stroke="#2e2c50" stroke-width="1.8"/>
<g stroke="#4b5a7a" stroke-width="1.3"><path d="M1293.9 697 H1303.5800000000002 L1309.6000000000001 704.224 V718.9 Q1309.6000000000001 720.4 1308.1000000000001 720.4 H1293.9 Q1292.4 720.4 1292.4 718.9 V698.5 Q1292.4 697 1293.9 697 Z"/><path d="M1301.0 704.02 L1301.0 709.168 L1296.872 713.848 M1301.0 709.168 L1305.1280000000002 711.508" stroke-width="1.2349999999999999"/></g>
<circle cx="216.9" cy="1042.9" r="12.2" fill="#3429a0"/><circle cx="216.4" cy="1038.1" r="1.35" fill="#fbf5ff"/><path d="M215.2 1041.5 H216.5 V1047.5 Q216.7 1048.9 218.6 1048.9" stroke="#fbf5ff" stroke-width="1.9" stroke-linecap="butt"/>
<circle cx="216.9" cy="1167.8" r="12.2" fill="#3429a0"/><circle cx="216.4" cy="1163.0" r="1.35" fill="#fbf5ff"/><path d="M215.2 1166.4 H216.5 V1172.4 Q216.7 1173.8 218.6 1173.8" stroke="#fbf5ff" stroke-width="1.9" stroke-linecap="butt"/>
<circle cx="216.9" cy="1292.9" r="12.2" fill="#3429a0"/><circle cx="216.4" cy="1288.1" r="1.35" fill="#fbf5ff"/><path d="M215.2 1291.5 H216.5 V1297.5 Q216.7 1298.9 218.6 1298.9" stroke="#fbf5ff" stroke-width="1.9" stroke-linecap="butt"/>
<rect x="2165" y="597" width="30" height="30" rx="6.5" fill="#4374f4"/>
<rect x="2198" y="597" width="30" height="30" rx="6.5" fill="#cd3b30"/>
<rect x="2231" y="597" width="30" height="30" rx="6.5" fill="#cd3b30"/>
<rect x="2264" y="597" width="30" height="30" rx="6.5" fill="#cd3b30"/>
<rect x="2297" y="597" width="30" height="30" rx="6.5" fill="#cd3b30"/>
<rect x="2330" y="597" width="30" height="30" rx="6.5" fill="#4ba457"/>
<g transform="translate(2165 597)" stroke="#fff" stroke-width="1.85"><path d="M22.7 15.2 V8.8 Q22.7 5.1 19 5.1 H12.2 Q8.6 5.1 8.6 8.8 V17.6 Q8.6 21 12 21 H15.4"/><path d="M9 8.5 H22.2"/><path d="M12.6 12.3 H16.9"/><path d="M4.4 25.2 Q4.4 23.2 6.4 23.2 H15.2 M9.2 23.2 V25.2 M13.8 23.2 V25.2"/><path d="M17.9 21.6 L20.1 25 L25.4 18.4"/></g>
<g transform="translate(2198 597)" stroke="#fff" stroke-width="1.85"><path d="M4.5 23.4 V13 Q4.5 12 5.4 11.4 L14.2 5.2 Q15.2 4.6 16.2 5"/><path d="M24.9 13.6 V23 Q24.9 25.2 22.7 25.2 H6.6 Q4.5 25.2 4.5 23.2"/><path d="M11.1 12.9 H18.1"/><path d="M9.9 24.6 V20.2 Q9.9 18.3 11.8 18.3 H18.1 Q20 18.3 20 20.2 V24.6"/><path d="M12.1 21.8 H18.1"/><circle cx="23.9" cy="6.25" r="4.5" fill="#cd3b30"/><path d="M20.9 3.4 L26.9 9.1"/></g>
<g transform="translate(2231 597)" stroke="#fff" stroke-width="1.85"><path d="M17.9 4.9 H10.2 Q6.8 4.9 6.8 8.3 V17.4 Q6.8 20.6 10 20.6 H14.8"/><path d="M7.4 7.9 H17.8"/><path d="M12.8 12.3 H16.3"/><path d="M4.4 25.2 Q4.4 23.2 6.4 23.2 H15.2 M9.2 23.2 V25.2 M13.8 23.2 V25.2"/><path d="M22.1 13.4 V14.6"/><circle cx="21" cy="22.2" r="4.2"/><path d="M21 19.6 L19.2 21 M21 19.6 L22.8 21 M19.4 23.2 L19.6 24 M22.6 23.2 L22.4 24"/><circle cx="23.9" cy="6.25" r="4.5" fill="#cd3b30"/><path d="M20.9 3.4 L26.9 9.1"/></g>
<g transform="translate(2264 597)" stroke="#fff" stroke-width="1.85"><path d="M17.9 4.9 H10.2 Q6.8 4.9 6.8 8.3 V17.4 Q6.8 20.6 10 20.6 H14.8"/><path d="M7.4 7.9 H17.8"/><path d="M12.8 12.3 H16.3"/><path d="M4.4 25.2 Q4.4 23.2 6.4 23.2 H15.2 M9.2 23.2 V25.2 M13.8 23.2 V25.2"/><path d="M22.2 13.4 V14.6"/><path d="M17.3 17.9 L24.6 25.2 M18.5 25.2 H24.6 V18.8"/><circle cx="23.9" cy="6.25" r="4.5" fill="#cd3b30"/><path d="M20.9 3.4 L26.9 9.1"/></g>
<g transform="translate(2297 597)" stroke="#fff" stroke-width="1.85"><path d="M16.5 5.2 H11 Q6 5.2 6 10.2 V19.8 Q6 24.9 11.2 24.9 H19.6 Q24.3 24.9 24.3 20.2 V13.6"/><path d="M14.6 9 V14.2 L19.2 17.5"/><circle cx="23.9" cy="6.25" r="4.5" fill="#cd3b30"/><path d="M20.9 3.4 L26.9 9.1"/></g>
<g transform="translate(2330 597)" stroke="#fff" stroke-width="1.7"><path d="M17.1 19.8 V7.4 H7.2 Q5.1 7.4 5.1 9.5 V19.8 H7"/><path d="M17.1 10.5 H20.2 Q24.5 11.8 24.5 16 V19.8 H22"/><path d="M12.4 20.6 H16.8"/><circle cx="9.7" cy="21" r="2.6"/><circle cx="19.4" cy="21" r="2.6"/></g>
<rect x="2165" y="1543.75" width="30" height="30" rx="6.5" fill="#4374f4"/>
<rect x="2198" y="1543.75" width="30" height="30" rx="6.5" fill="#cd3b30"/>
<rect x="2231" y="1543.75" width="30" height="30" rx="6.5" fill="#cd3b30"/>
<rect x="2264" y="1543.75" width="30" height="30" rx="6.5" fill="#cd3b30"/>
<rect x="2297" y="1543.75" width="30" height="30" rx="6.5" fill="#cd3b30"/>
<rect x="2330" y="1543.75" width="30" height="30" rx="6.5" fill="#4ba457"/>
<g transform="translate(2165 1543.75)" stroke="#fff" stroke-width="1.85"><path d="M22.7 15.2 V8.8 Q22.7 5.1 19 5.1 H12.2 Q8.6 5.1 8.6 8.8 V17.6 Q8.6 21 12 21 H15.4"/><path d="M9 8.5 H22.2"/><path d="M12.6 12.3 H16.9"/><path d="M4.4 25.2 Q4.4 23.2 6.4 23.2 H15.2 M9.2 23.2 V25.2 M13.8 23.2 V25.2"/><path d="M17.9 21.6 L20.1 25 L25.4 18.4"/></g>
<g transform="translate(2198 1543.75)" stroke="#fff" stroke-width="1.85"><path d="M4.5 23.4 V13 Q4.5 12 5.4 11.4 L14.2 5.2 Q15.2 4.6 16.2 5"/><path d="M24.9 13.6 V23 Q24.9 25.2 22.7 25.2 H6.6 Q4.5 25.2 4.5 23.2"/><path d="M11.1 12.9 H18.1"/><path d="M9.9 24.6 V20.2 Q9.9 18.3 11.8 18.3 H18.1 Q20 18.3 20 20.2 V24.6"/><path d="M12.1 21.8 H18.1"/><circle cx="23.9" cy="6.25" r="4.5" fill="#cd3b30"/><path d="M20.9 3.4 L26.9 9.1"/></g>
<g transform="translate(2231 1543.75)" stroke="#fff" stroke-width="1.85"><path d="M17.9 4.9 H10.2 Q6.8 4.9 6.8 8.3 V17.4 Q6.8 20.6 10 20.6 H14.8"/><path d="M7.4 7.9 H17.8"/><path d="M12.8 12.3 H16.3"/><path d="M4.4 25.2 Q4.4 23.2 6.4 23.2 H15.2 M9.2 23.2 V25.2 M13.8 23.2 V25.2"/><path d="M22.1 13.4 V14.6"/><circle cx="21" cy="22.2" r="4.2"/><path d="M21 19.6 L19.2 21 M21 19.6 L22.8 21 M19.4 23.2 L19.6 24 M22.6 23.2 L22.4 24"/><circle cx="23.9" cy="6.25" r="4.5" fill="#cd3b30"/><path d="M20.9 3.4 L26.9 9.1"/></g>
<g transform="translate(2264 1543.75)" stroke="#fff" stroke-width="1.85"><path d="M17.9 4.9 H10.2 Q6.8 4.9 6.8 8.3 V17.4 Q6.8 20.6 10 20.6 H14.8"/><path d="M7.4 7.9 H17.8"/><path d="M12.8 12.3 H16.3"/><path d="M4.4 25.2 Q4.4 23.2 6.4 23.2 H15.2 M9.2 23.2 V25.2 M13.8 23.2 V25.2"/><path d="M22.2 13.4 V14.6"/><path d="M17.3 17.9 L24.6 25.2 M18.5 25.2 H24.6 V18.8"/><circle cx="23.9" cy="6.25" r="4.5" fill="#cd3b30"/><path d="M20.9 3.4 L26.9 9.1"/></g>
<g transform="translate(2297 1543.75)" stroke="#fff" stroke-width="1.85"><path d="M16.5 5.2 H11 Q6 5.2 6 10.2 V19.8 Q6 24.9 11.2 24.9 H19.6 Q24.3 24.9 24.3 20.2 V13.6"/><path d="M14.6 9 V14.2 L19.2 17.5"/><circle cx="23.9" cy="6.25" r="4.5" fill="#cd3b30"/><path d="M20.9 3.4 L26.9 9.1"/></g>
<g transform="translate(2330 1543.75)" stroke="#fff" stroke-width="1.7"><path d="M17.1 19.8 V7.4 H7.2 Q5.1 7.4 5.1 9.5 V19.8 H7"/><path d="M17.1 10.5 H20.2 Q24.5 11.8 24.5 16 V19.8 H22"/><path d="M12.4 20.6 H16.8"/><circle cx="9.7" cy="21" r="2.6"/><circle cx="19.4" cy="21" r="2.6"/></g>
<g transform="translate(0 0)" stroke="#3e5270" stroke-width="1.55">
<path d="M2647.2 621.6 L2648 617.4 Q2648.4 616.2 2649.4 615.2 L2661.6 603 Q2663.4 601.4 2665.4 603 Q2667 604.8 2665.4 606.6 L2653.2 618.8 Q2652.2 619.8 2651 620.2 Z M2660.2 604.4 L2664 608.2"/>
<path d="M2679.8 604.8 L2694 619 M2694 604.8 L2679.8 619"/>
<rect x="2705.6" y="606.8" width="16.6" height="16.6" rx="3"/><path d="M2711.8 606.6 V603.2 Q2711.8 600.4 2714.6 600.4 H2725.6 Q2728.4 600.4 2728.4 603.2 V614.4 Q2728.4 617.2 2725.6 617.2 H2722.4"/>
</g>
<g stroke="#3e5270" stroke-width="1.55"><path d="M2739.9 600.4 H2749.58 L2755.6 607.624 V622.1 Q2755.6 623.6 2754.1 623.6 H2739.9 Q2738.4 623.6 2738.4 622.1 V601.9 Q2738.4 600.4 2739.9 600.4 Z"/><path d="M2747.0 607.36 L2747.0 612.4639999999999 L2742.8720000000003 617.1039999999999 M2747.0 612.4639999999999 L2751.128 614.784" stroke-width="1.4725"/></g>
<g transform="translate(0 0)" stroke="#3e5270" stroke-width="1.55"><path d="M2765.6 611.9 L2770.6 604.6 Q2771.4 603.4 2772.8 603.4 H2785.4 Q2787.4 603.4 2787.4 605.4 V618.4 Q2787.4 620.4 2785.4 620.4 H2772.8 Q2771.4 620.4 2770.6 619.2 Z"/><path d="M2776.8 611.9 H2782.2 M2779.5 609.2 V614.6" stroke-width="1.8"/></g>
<g transform="translate(0 946.75)" stroke="#3e5270" stroke-width="1.55">
<path d="M2647.2 621.6 L2648 617.4 Q2648.4 616.2 2649.4 615.2 L2661.6 603 Q2663.4 601.4 2665.4 603 Q2667 604.8 2665.4 606.6 L2653.2 618.8 Q2652.2 619.8 2651 620.2 Z M2660.2 604.4 L2664 608.2"/>
<path d="M2679.8 604.8 L2694 619 M2694 604.8 L2679.8 619"/>
<rect x="2705.6" y="606.8" width="16.6" height="16.6" rx="3"/><path d="M2711.8 606.6 V603.2 Q2711.8 600.4 2714.6 600.4 H2725.6 Q2728.4 600.4 2728.4 603.2 V614.4 Q2728.4 617.2 2725.6 617.2 H2722.4"/>
</g>
<g stroke="#3e5270" stroke-width="1.55"><path d="M2739.9 1547.15 H2749.58 L2755.6 1554.374 V1568.8500000000001 Q2755.6 1570.3500000000001 2754.1 1570.3500000000001 H2739.9 Q2738.4 1570.3500000000001 2738.4 1568.8500000000001 V1548.65 Q2738.4 1547.15 2739.9 1547.15 Z"/><path d="M2747.0 1554.1100000000001 L2747.0 1559.2140000000002 L2742.8720000000003 1563.854 M2747.0 1559.2140000000002 L2751.128 1561.534" stroke-width="1.4725"/></g>
<g transform="translate(0 946.75)" stroke="#3e5270" stroke-width="1.55"><path d="M2765.6 611.9 L2770.6 604.6 Q2771.4 603.4 2772.8 603.4 H2785.4 Q2787.4 603.4 2787.4 605.4 V618.4 Q2787.4 620.4 2785.4 620.4 H2772.8 Q2771.4 620.4 2770.6 619.2 Z"/><path d="M2776.8 611.9 H2782.2 M2779.5 609.2 V614.6" stroke-width="1.8"/></g>
</svg>
</body></html>
